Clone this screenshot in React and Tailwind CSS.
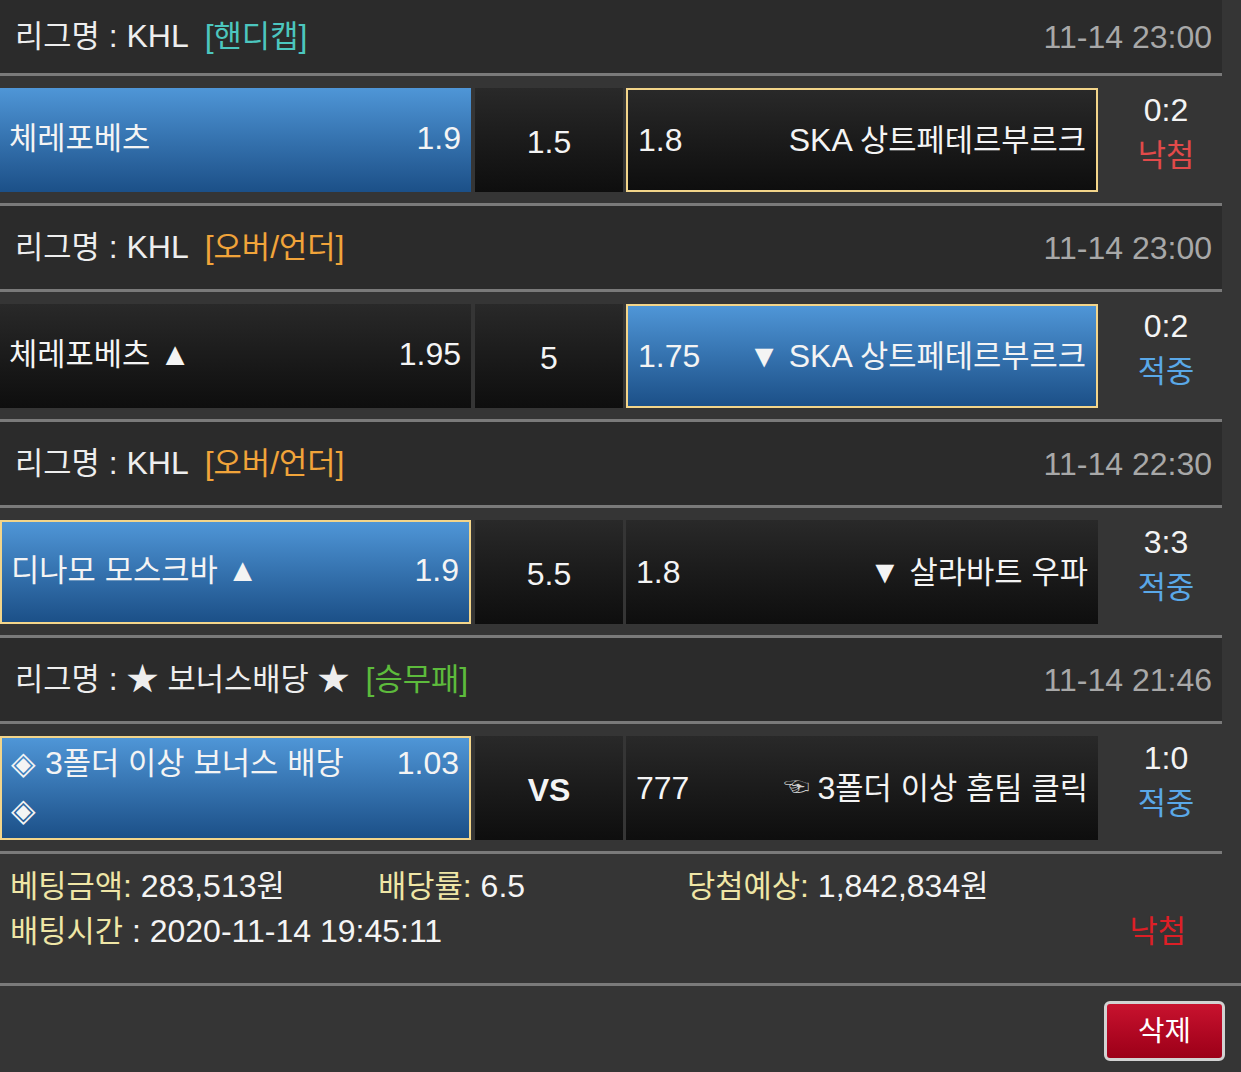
// hangul glyphs in Noto CJK run wider than the reference font, shrink them a bit
function K({ children }) {
  const parts = String(children).split(/([\u3131-\uD79D]+)/)
  return parts.map((p, i) =>
    /[\u3131-\uD79D]/.test(p) ? (
      <span key={i} className="text-[0.96em]">
        {p}
      </span>
    ) : (
      p
    )
  )
}

const sections = [
  {
    league: 'KHL',
    tag: '[핸디캡]',
    tagColor: 'text-[#4cc6bf]',
    date: '11-14 23:00',
    headerH: 'h-[73px]',
    home: { name: '체레포베츠', odds: '1.9', blue: true, border: false },
    mid: '1.5',
    away: { name: 'SKA 상트페테르부르크', odds: '1.8', blue: false, border: true },
    score: '0:2',
    result: 'lose',
  },
  {
    league: 'KHL',
    tag: '[오버/언더]',
    tagColor: 'text-[#f1a43a]',
    date: '11-14 23:00',
    headerH: 'h-[83px]',
    home: { name: '체레포베츠 ▲', odds: '1.95', blue: false, border: false },
    mid: '5',
    away: { name: '▼ SKA 상트페테르부르크', odds: '1.75', blue: true, border: true },
    score: '0:2',
    result: 'win',
  },
  {
    league: 'KHL',
    tag: '[오버/언더]',
    tagColor: 'text-[#f1a43a]',
    date: '11-14 22:30',
    headerH: 'h-[83px]',
    home: { name: '디나모 모스크바 ▲', odds: '1.9', blue: true, border: true },
    mid: '5.5',
    away: { name: '▼ 살라바트 우파', odds: '1.8', blue: false, border: false },
    score: '3:3',
    result: 'win',
  },
  {
    league: '★ 보너스배당 ★',
    tag: '[승무패]',
    tagColor: 'text-[#5dbb3c]',
    date: '11-14 21:46',
    headerH: 'h-[83px]',
    home: { name: '◈ 3폴더 이상 보너스 배당 ◈', odds: '1.03', blue: true, border: true },
    mid: 'VS',
    away: { name: '3폴더 이상 홈팀 클릭', odds: '777', blue: false, border: false, hand: true },
    score: '1:0',
    result: 'win',
  },
]

function cellClass(side) {
  const bg = side.blue
    ? 'bg-gradient-to-b from-[#4f96d7] to-[#1c5088]'
    : 'bg-gradient-to-b from-[#292929] to-[#0e0e0e]'
  const border = side.border ? 'border-2 border-[#f3d58a]' : ''
  return `${bg} ${border}`
}

function Line({ full }) {
  return <div className={full ? 'h-[3px] bg-[#7a7a7a]' : 'h-[3px] w-[1222px] bg-[#7a7a7a]'} />
}

function Section({ s, first }) {
  return (
    <div>
      {!first && <Line />}
      <div
        className={`${s.headerH} w-[1222px] bg-[#2b2b2b] flex items-center justify-between pl-[15px] pr-[10px]`}
      >
        <div className="flex items-center text-[#eeeeee]">
          <span>
            <K>리그명</K> : <K>{s.league}</K>
          </span>
          <span className={`ml-[16px] ${s.tagColor}`}>
            <K>{s.tag}</K>
          </span>
        </div>
        <span className="text-[#a8a8a8]">{s.date}</span>
      </div>
      <Line />
      <div className="w-[1222px] flex pt-[12px] pb-[11px]">
        <div className={`w-[471px] h-[104px] flex items-center pl-[9px] pr-[10px] ${cellClass(s.home)}`}>
          <div className="flex-1 flex items-start leading-[46px] -mt-[4px] text-[#f4f4f4]">
            <span className="flex-1 pr-[40px]">
              <K>{s.home.name}</K>
            </span>
            <span>{s.home.odds}</span>
          </div>
        </div>
        <div className="ml-[4px] w-[148px] h-[104px] flex items-center justify-center pt-[4px] bg-gradient-to-b from-[#292929] to-[#0e0e0e] text-[#f4f4f4]">
          <span className={s.mid === 'VS' ? 'font-bold' : ''}>{s.mid}</span>
        </div>
        <div
          className={`ml-[3px] w-[472px] h-[104px] flex items-center justify-between pl-[10px] pr-[10px] text-[#f4f4f4] ${cellClass(s.away)}`}
        >
          <span>{s.away.odds}</span>
          <span>
            {s.away.hand && <span className="text-[26px] text-[#cfcfcf] mr-[8px] align-[3px]">☜</span>}
            <K>{s.away.name}</K>
          </span>
        </div>
        <div className="flex-1 flex flex-col items-center justify-center pl-[12px] leading-[45px] -mt-[14px]">
          <span className="text-[#f4f4f4]">{s.score}</span>
          <span className={s.result === 'win' ? 'text-[#5aa8e8]' : 'text-[#e24a4a]'}>
            <K>{s.result === 'win' ? '적중' : '낙첨'}</K>
          </span>
        </div>
      </div>
    </div>
  )
}

export default function App() {
  return (
    <div className="min-h-screen bg-[#353535] font-['Liberation_Sans','Noto_Sans_CJK_KR',sans-serif] text-[32px] leading-none overflow-hidden">
      <div className="w-[1241px]">
        {sections.map((s, i) => (
          <Section key={i} s={s} first={i === 0} />
        ))}
        <Line />

        <div className="h-[129px] pl-[10px] pr-[55px] pt-[13px] text-[#f4f4f4]">
          <div className="flex h-[38px] items-center">
            <div className="w-[368px]">
              <span className="text-[#efe6a6]">
                <K>베팅금액</K>:
              </span>{' '}
              283,513<K>원</K>
            </div>
            <div className="w-[309px]">
              <span className="text-[#efe6a6]">
                <K>배당률</K>:
              </span>{' '}
              6.5
            </div>
            <div>
              <span className="text-[#efe6a6]">
                <K>당첨예상</K>:
              </span>{' '}
              1,842,834<K>원</K>
            </div>
          </div>
          <div className="flex h-[52px] items-center justify-between">
            <div>
              <span className="text-[#efe6a6]">
                <K>배팅시간</K>
              </span>{' '}
              : 2020-11-14 19:45:11
            </div>
            <span className="text-[#dd1f26]">
              <K>낙첨</K>
            </span>
          </div>
        </div>

        <Line full />

        <div className="flex justify-end pt-[15px] pr-[16px] pb-[11px]">
          <button className="w-[121px] h-[60px] rounded-[6px] border-[3px] border-[#d2d2d2] bg-gradient-to-b from-[#c8122e] to-[#9c0018] text-white text-[30px] flex items-center justify-center">
            <K>삭제</K>
          </button>
        </div>
      </div>
    </div>
  )
}
